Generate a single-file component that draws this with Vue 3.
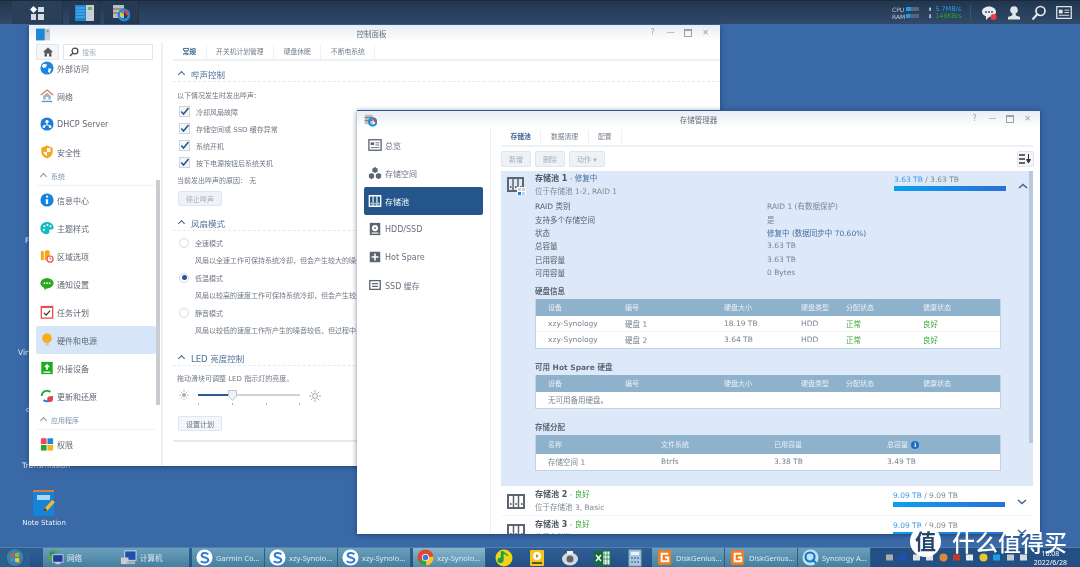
<template>
  <div class="desktop">
    <header class="topbar">
      <div class="top-left">
        <div class="top-btn wide">
          <svg width="16" height="16" viewBox="0 0 16 16"><path d="M4.5 1 8 4.5 4.5 8 1 4.5Z" fill="#fff"/><rect x="9" y="2" width="6" height="5" fill="#d5dbe2"/><rect x="2" y="9" width="5" height="6" fill="#d5dbe2"/><rect x="9" y="9" width="6" height="6" fill="#d5dbe2"/></svg>
        </div>
        <div class="top-btn active first">
          <svg width="19" height="16" viewBox="0 0 19 16"><rect width="11" height="16" fill="#1d87d8"/><path d="M1 3h9M1 6h9M1 9h9M1 12h9" stroke="#7cc3f2" stroke-width=".8"/><rect x="11" width="8" height="16" fill="#c7ced4"/><rect x="13" y="2" width="4" height="3" fill="#6fb46b"/></svg>
        </div>
        <div class="top-btn active second">
          <svg width="18" height="18" viewBox="0 0 18 18"><rect x="1" y="1" width="11" height="13" fill="#b9bec4"/><path d="M1 5h11M1 9h11" stroke="#8a5b3c"/><circle cx="12" cy="11" r="5" fill="none" stroke="#1c8be0" stroke-width="3"/><path d="M12 6a5 5 0 0 1 5 5h-3Z" fill="#e8412f"/><path d="M8 8l4 3-4 2Z" fill="#f2c52c"/></svg>
        </div>
      </div>
      <div class="top-right">
        <div class="meter">
          <div class="meter-row"><span>CPU</span><i class="bar"><b style="width: 40%"></b></i></div>
          <div class="meter-row"><span>RAM</span><i class="bar"><b style="width: 30%"></b></i></div>
        </div>
        <div class="speed">
          <div><em>⬆</em><span class="up">5.7MB/s</span></div>
          <div><em>⬇</em><span class="down">149KB/s</span></div>
        </div>
        <div class="top-sep"></div>
        <svg class="ti" width="16" height="16" viewBox="0 0 16 16"><path d="M8 1.5c4 0 7 2.3 7 5.2s-3 5.2-7 5.2l-3 3v-3.6C2.5 10.5 1 8.8 1 6.7 1 3.800 4 1.500 8 1.500Z" fill="#e8ecef"/><circle cx="5" cy="7" r=".9" fill="#2d4460"/><circle cx="8" cy="7" r=".9" fill="#2d4460"/><circle cx="11" cy="7" r=".9" fill="#2d4460"/><circle cx="12.5" cy="12" r="3" fill="#ef3d3d"/></svg>
        <svg class="ti" width="16" height="16" viewBox="0 0 16 16"><circle cx="8" cy="5" r="3.8" fill="#dfe4e9"/><path d="M6.5 8h3l.5 2.5 4 1.5v2.5H2V12l4-1.5Z" fill="#dfe4e9"/></svg>
        <svg class="ti" width="16" height="16" viewBox="0 0 16 16"><circle cx="9.5" cy="6" r="4.5" fill="none" stroke="#e8ecef" stroke-width="1.7"/><path d="M6 9.5 1.5 14.5" stroke="#e8ecef" stroke-width="2"/></svg>
        <svg class="ti" width="16" height="13" viewBox="0 0 17 14"><rect x=".7" y=".7" width="15.6" height="12.6" fill="none" stroke="#e8ecef" stroke-width="1.3"/><rect x="3" y="4" width="4" height="4" fill="#e8ecef"/><path d="M9 4.5h5M9 7h5M3 10h11" stroke="#e8ecef"/></svg>
      </div>
    </header>

    <div class="shortcut s1">F</div>
    <div class="shortcut s2">Virt</div>
    <div class="shortcut s3">q</div>
    <div class="shortcut s4">Transmission</div>
    <div class="note">
      <svg width="24" height="28" viewBox="0 0 24 28"><rect x="1" y="1" width="21" height="26" rx="1" fill="#1683d8"/><rect x="1" y="1" width="21" height="2" fill="#e0793a"/><rect x="5" y="6" width="13" height="5" fill="#a9d7f5"/><path d="M11 23l2-4 7-8 3 2-7 8Z" fill="#f5b92e"/><path d="M11 23l2-4 2 2Z" fill="#333"/></svg>
      <span>Note Station</span>
    </div>

    <!-- control panel -->
    <section class="window panel">
      <div class="titlebar">
        <svg class="app-ico" width="14" height="13" viewBox="0 0 19 16"><rect width="12" height="16" fill="#1d87d8"/><rect x="12" width="7" height="16" fill="#c7ced4"/><rect x="14" y="2" width="3" height="3" fill="#6fb46b"/></svg>
        <span class="win-title">控制面板</span>
        <div class="win-ctl"><span>?</span><span>—</span><span class="sq"></span><span>✕</span></div>
      </div>
      <div class="win-body">
        <aside class="side">
          <div class="side-top">
            <div class="home">
              <svg width="10" height="10" viewBox="0 0 10 10"><path d="M5 .5 0 5h1.5v4.5H4v-3h2v3h2.5V5H10Z" fill="#55595f"/></svg>
            </div>
            <div class="search">
              <svg width="10" height="10" viewBox="0 0 10 10"><circle cx="6" cy="4" r="2.9" fill="none" stroke="#444" stroke-width="1.2"/><path d="M3.8 6.2 1 9" stroke="#444" stroke-width="1.3"/></svg>
              <span>搜索</span>
            </div>
          </div>
          <div class="side-list">
            <div class="side-scroll"></div>
            <template v-for="row in panelItems" :key="row.label">
              <div v-if="row.head" class="side-head"><span class="caret"></span>{{ row.label }}</div>
              <div v-else class="side-item" :class="{ on: row.on }">
                <svg width="14" height="14" viewBox="0 0 16 16" v-html="row.svg"></svg>
                <span>{{ row.label }}</span>
              </div>
            </template>
          </div>
        </aside>
        <main class="pane">
          <nav class="tabs">
            <span v-for="(t, i) in panelTabs" :key="t" class="tab" :class="{ cur: i === 0 }">{{ t }}</span>
          </nav>
          <h3 class="sec first"><span class="caret dark"></span>哔声控制</h3>
          <div class="line">以下情况发生时发出哔声：</div>
          <div v-for="c in beeps" :key="c" class="line check">
            <svg width="11" height="11" viewBox="0 0 11 11"><rect x=".5" y=".5" width="10" height="10" fill="#f4f6f9" stroke="#ccd5df"/><path d="M2.3 5.5 4.5 8l5-6" fill="none" stroke="#24558e" stroke-width="1.5"/></svg>
            <span>{{ c }}</span>
          </div>
          <div class="line">当前发出哔声的原因： 无</div>
          <button class="btn muted stop">停止哔声</button>

          <h3 class="sec fan"><span class="caret dark"></span>风扇模式</h3>
          <div class="fans">
            <template v-for="m in fanModes" :key="m.name">
              <div class="row-fan radio"><i :class="{ sel: m.sel }"></i><span>{{ m.name }}</span></div>
              <div class="row-fan desc">{{ m.desc }}</div>
            </template>
          </div>

          <h3 class="sec led"><span class="caret dark"></span>LED 亮度控制</h3>
          <div class="line hint">拖动滑块可调整 LED 指示灯的亮度。</div>
          <div class="slider">
            <svg width="10" height="10" viewBox="0 0 10 10"><circle cx="5" cy="5" r="2" fill="#aaa"/><path d="M5 0v2M5 8v2M0 5h2M8 5h2M1.5 1.5 3 3M7 7l1.5 1.5M8.5 1.5 7 3M3 7 1.5 8.5" stroke="#aaa" stroke-width=".8"/></svg>
            <div class="track">
              <b></b>
              <svg class="thumb" width="9" height="11" viewBox="0 0 9 11"><path d="M.5.5h8v6l-4 4-4-4Z" fill="#eef1f5" stroke="#bcc5cf"/></svg>
              <i v-for="n in 4" :key="n" class="tick" :class="'tk' + n"></i>
            </div>
            <svg width="12" height="12" viewBox="0 0 10 10"><circle cx="5" cy="5" r="2" fill="none" stroke="#999" stroke-width=".7"/><path d="M5 0v2M5 8v2M0 5h2M8 5h2M1.5 1.5 3 3M7 7l1.5 1.5M8.5 1.5 7 3M3 7 1.5 8.5" stroke="#999" stroke-width=".7"/></svg>
          </div>
          <button class="btn plan">设置计划</button>
          <div class="end-line"></div>
        </main>
      </div>
    </section>

    <!-- storage manager -->
    <section class="window storage">
      <div class="titlebar">
        <svg class="app-ico" width="13" height="13" viewBox="0 0 18 18"><rect x="1" y="1" width="11" height="13" fill="#b9bec4"/><path d="M1 5h11M1 9h11" stroke="#8a5b3c"/><circle cx="12" cy="11" r="5" fill="none" stroke="#1c8be0" stroke-width="3"/><path d="M12 6a5 5 0 0 1 5 5h-3Z" fill="#e8412f"/></svg>
        <span class="win-title">存储管理器</span>
        <div class="win-ctl"><span>?</span><span>—</span><span class="sq"></span><span>✕</span></div>
      </div>
      <div class="win-body">
        <aside class="nav">
          <div v-for="n in storageNav" :key="n.label" class="nav-item" :class="{ on: n.on }">
            <svg width="14" height="14" viewBox="0 0 16 16" v-html="n.svg"></svg>
            <span>{{ n.label }}</span>
          </div>
        </aside>
        <main class="store">
          <nav class="tabs">
            <span v-for="(t, i) in storageTabs" :key="t" class="tab" :class="{ cur: i === 0 }">{{ t }}</span>
          </nav>
          <div class="tools">
            <button class="btn muted">新增</button>
            <button class="btn muted">删除</button>
            <button class="btn muted">动作 ▾</button>
            <button class="btn sort">
              <svg width="13" height="10" viewBox="0 0 13 10"><path d="M0 1h6M0 5h6M0 9h6" stroke="#333" stroke-width="1.4"/><path d="M9.5 0v6M7.5 5.5h4l-2 3.5Z" fill="#333" stroke="#333"/></svg>
            </button>
          </div>

          <div class="pools">
            <div class="pool open">
              <div class="pool-head">
                <svg class="pool-ico" width="19" height="18" viewBox="0 0 19 18"><path d="M1 1h15v13H1Z" fill="none" stroke="#5c6470" stroke-width="2"/><path d="M6 2v11M11 2v11" stroke="#5c6470" stroke-width="1.5"/><rect x="3" y="9" width="1.5" height="2" fill="#5c6470"/><rect x="8" y="9" width="1.5" height="2" fill="#5c6470"/><rect x="13" y="9" width="1.5" height="2" fill="#5c6470"/><rect x="10" y="10" width="9" height="8" fill="#fff"/><rect x="11" y="11" width="3" height="3" fill="#c9d2dc"/><rect x="15" y="11" width="3" height="3" fill="#c9d2dc"/><rect x="11" y="15" width="3" height="3" fill="#0f86e8"/><rect x="15" y="15" width="3" height="3" fill="#c9d2dc"/></svg>
                <div class="pool-name">
                  <div><b>存储池 1</b> <span class="dash">-</span> <span class="repair">修复中</span></div>
                  <div class="pool-sub">位于存储池 1-2, RAID 1</div>
                </div>
                <div class="usage">
                  <div><span class="used">3.63 TB</span> / 3.63 TB</div>
                  <div class="usage-bar"></div>
                </div>
                <svg class="chev" width="10" height="6" viewBox="0 0 10 6"><path d="M1 5l4-3.500L9 5" fill="none" stroke="#3d6797" stroke-width="1.5"/></svg>
              </div>
              <dl class="facts">
                <div v-for="f in facts" :key="f[0]" class="fact">
                  <dt>{{ f[0] }}</dt>
                  <dd :class="{ repair: f[2] }">{{ f[1] }}</dd>
                </div>
              </dl>

              <h4 class="tbl-title t1">硬盘信息</h4>
              <div class="tbl">
                <div class="tr th disks"><span v-for="c in diskCols" :key="c">{{ c }}</span></div>
                <div v-for="d in disks" :key="d[1]" class="tr disks">
                  <span>xzy-Synology</span><span>{{ d[1] }}</span><span>{{ d[2] }}</span><span>HDD</span>
                  <span class="ok">正常</span><span class="ok">良好</span>
                </div>
              </div>

              <h4 class="tbl-title t2">可用 Hot Spare 硬盘</h4>
              <div class="tbl">
                <div class="tr th disks"><span v-for="c in diskCols" :key="c">{{ c }}</span></div>
                <div class="tr"><span>无可用备用硬盘。</span></div>
              </div>

              <h4 class="tbl-title t3">存储分配</h4>
              <div class="tbl">
                <div class="tr th vols tall">
                  <span>名称</span><span>文件系统</span><span>已用容量</span>
                  <span>总容量 <i class="info">i</i></span>
                </div>
                <div class="tr vols"><span>存储空间 1</span><span>Btrfs</span><span>3.38 TB</span><span>3.49 TB</span></div>
              </div>
            </div>

            <div v-for="p in closedPools" :key="p.name" class="pool closed">
              <svg class="pool-ico" width="19" height="15" viewBox="0 0 19 15"><path d="M1 1h16v13H1Z" fill="none" stroke="#5c6470" stroke-width="2"/><path d="M6.5 2v11M11.5 2v11" stroke="#5c6470" stroke-width="1.5"/><rect x="3" y="9" width="1.5" height="2" fill="#5c6470"/><rect x="8.5" y="9" width="1.5" height="2" fill="#5c6470"/><rect x="14" y="9" width="1.5" height="2" fill="#5c6470"/></svg>
              <div class="pool-name">
                <div><b>{{ p.name }}</b> <span class="dash">-</span> <span class="ok">良好</span></div>
                <div class="pool-sub">{{ p.sub }}</div>
              </div>
              <div class="usage">
                <div><span class="used">9.09 TB</span> / 9.09 TB</div>
                <div class="usage-bar"></div>
              </div>
              <svg class="chev" width="10" height="6" viewBox="0 0 10 6"><path d="M1 1l4 3.500L9 1" fill="none" stroke="#3d6797" stroke-width="1.5"/></svg>
            </div>
          </div>
        </main>
      </div>
    </section>

    <footer class="taskbar">
      <div class="start">
        <svg width="22" height="19" viewBox="0 0 22 22"><circle cx="11" cy="11" r="10.5" fill="#3c7eb0" stroke="#24506f"/><path d="M6 7l4-1v4.500H6Z" fill="#e8512a"/><path d="M11 6l5-1v5.500h-5Z" fill="#7cc03c"/><path d="M6 11.500h4V16l-4-1Z" fill="#2e9be0"/><path d="M11 11.500h5V17l-5-1Z" fill="#f2c32c"/></svg>
      </div>
      <div class="grip"></div>
      <div v-for="t in taskLeft" :key="t.id" class="task" :class="t.cls">
        <svg width="17" height="17" viewBox="0 0 18 18" v-html="t.svg"></svg>
        <span>{{ t.label }}</span>
      </div>
      <div class="quick">
        <svg v-for="q in quick" :key="q.id" width="18" height="18" viewBox="0 0 18 18" v-html="q.svg"></svg>
      </div>
      <div v-for="t in taskRight" :key="t.id" class="task">
        <svg width="17" height="17" viewBox="0 0 18 18" v-html="t.svg"></svg>
        <span>{{ t.label }}</span>
      </div>
      <div class="tray">
        <div class="tray-icons">
          <svg v-for="(c, i) in trayColors" :key="i" width="9" height="9" viewBox="0 0 9 9"><circle v-if="c.round" cx="4.5" cy="4.5" r="4" :fill="c.fill"/><rect v-else x="1" y="1.5" width="7" height="6" :fill="c.fill"/></svg>
        </div>
        <div class="clock"><span>16:08</span><span>2022/6/28</span></div>
      </div>
    </footer>

    <div class="mark">
      <span class="mark-dot">值</span>
      <span class="mark-text">什么值得买</span>
    </div>
  </div>
</template>

<script setup>
const panelTabs = ['常规', '开关机计划管理', '硬盘休眠', '不断电系统']
const storageTabs = ['存储池', '数据清理', '配置']
const beeps = ['冷却风扇故障', '存储空间或 SSD 缓存异常', '系统开机', '按下电源按钮后系统关机']

const fanModes = [
  { name: '全速模式', desc: '风扇以全速工作可保持系统冷却，但会产生较大的噪音。' },
  { name: '低温模式', desc: '风扇以较高的速度工作可保持系统冷却，但会产生较大的噪音。', sel: true },
  { name: '静音模式', desc: '风扇以较低的速度工作所产生的噪音较低，但过程中系统温度较高。' }
]

const panelItems = [
  { label: '外部访问', svg: '<circle cx="8" cy="8" r="7.5" fill="#1b86e0"/><path d="M4 3l4 1-1 3-3 1-2-2ZM10 8l3 1-2 5-2-2Z" fill="#fff"/>' },
  { label: '网络', svg: '<path d="M8 1 1 7M8 1l7 6" stroke="#e8604c" stroke-width="1.5"/><path d="M8 4 3.5 8v4h9V8Z" fill="#a9b4be"/><rect x="6.5" y="9" width="3" height="3" fill="#fff"/><rect x="2" y="13.5" width="12" height="1.5" fill="#3c9be8"/>' },
  { label: 'DHCP Server', svg: '<circle cx="8" cy="8" r="7.5" fill="#1b7fd9"/><circle cx="8" cy="5.5" r="2" fill="#fff"/><circle cx="4.5" cy="11" r="1.5" fill="#fff"/><circle cx="11.5" cy="11" r="1.5" fill="#fff"/><path d="M8 7v2M4.5 10 8 9l3.5 1" stroke="#fff" fill="none"/>' },
  { label: '安全性', svg: '<path d="M8 .5 14.5 3v5c0 3.5-3 6-6.5 7.500C4.500 14 1.500 11.500 1.500 8V3Z" fill="#f5a81f"/><path d="M8 3.500h4V8H8v4.500C6 11.500 4 10 4 8h4Z" fill="#fff"/>' },
  { label: '系统', head: true },
  { label: '信息中心', svg: '<circle cx="8" cy="8" r="7.5" fill="#1283e0"/><rect x="7" y="3" width="2.3" height="2.3" fill="#fff"/><path d="M6.500 7h2.800v5.500H6.800" fill="#fff"/>' },
  { label: '主题样式', svg: '<path d="M8 1c4.500 0 7.500 3 7.500 6.500 0 3-3.500 2-4.500 2.500s.5 2-.5 3.500C9.500 15 8 15 7.500 15 3.500 15 .5 12 .5 8S3.500 1 8 1Z" fill="#13bcc0"/><circle cx="5" cy="6" r="1.2" fill="#fff"/><circle cx="8.5" cy="4.5" r="1.2" fill="#fff"/><circle cx="12" cy="6" r="1.2" fill="#fff"/><circle cx="4.5" cy="10" r="1.2" fill="#fff"/>' },
  { label: '区域选项', svg: '<path d="M1 2l4 1 3-2 3 1v5l-4 6-3-1-3 1Z" fill="#f6a81c"/><path d="M5 3v9" stroke="#fff"/><circle cx="11.5" cy="11.5" r="3.5" fill="#fff" stroke="#ee4a42" stroke-width="1.3"/><path d="M11.5 9.5v2H13" stroke="#ee4a42" fill="none"/>' },
  { label: '通知设置', svg: '<ellipse cx="8" cy="7" rx="7.5" ry="6" fill="#2aa71d"/><path d="M5 11v4l4-3Z" fill="#2aa71d"/><circle cx="5" cy="7" r="1" fill="#fff"/><circle cx="8" cy="7" r="1" fill="#fff"/><circle cx="11" cy="7" r="1" fill="#fff"/>' },
  { label: '任务计划', svg: '<rect x="1.5" y="2.5" width="13" height="12.5" fill="#fff" stroke="#ed4c49" stroke-width="1.5"/><rect x="1" y="1" width="14" height="2.5" fill="#ed4c49"/><path d="M4.500 9 7 11.500l4.500-5" fill="none" stroke="#333" stroke-width="1.4"/>' },
  { label: '硬件和电源', on: true, svg: '<circle cx="8" cy="6" r="5.5" fill="#f7ae16"/><rect x="6" y="11.5" width="4" height="3" fill="#c4ccd4"/>' },
  { label: '外接设备', svg: '<rect x="1.5" y="1" width="13" height="14" fill="#1eaa1a"/><path d="M8 3 4.500 7H7v3h2V7h2.500ZM4 12h8v1.300H4Z" fill="#fff"/>' },
  { label: '更新和还原', svg: '<path d="M2 8a6 6 0 0 1 10-4.500" fill="none" stroke="#2aa84a" stroke-width="2.2"/><path d="M14 8a6 6 0 0 1-10 4.500" fill="none" stroke="#1b86e0" stroke-width="2.2"/><circle cx="11.5" cy="11.5" r="3.3" fill="#ee4043"/>' },
  { label: '应用程序', head: true },
  { label: '权限', svg: '<rect x="1" y="2" width="6.5" height="6" fill="#ef4655"/><path d="M2.500 3V1.500H6V3" stroke="#ef4655" fill="none"/><rect x="8.5" y="1.5" width="6.5" height="6.5" fill="#1b86e0"/><rect x="1" y="9" width="6.5" height="6.5" fill="#27a532"/><rect x="8.5" y="9" width="6.5" height="6.5" fill="#f5b21c"/>' }
]

const grey = '#5d6570'
const storageNav = [
  { label: '总览', svg: `<rect x="1" y="2" width="14" height="12" fill="none" stroke="${grey}" stroke-width="1.5"/><rect x="3" y="5" width="4" height="3" fill="${grey}"/><path d="M8.5 5.5H13M8.5 8H13M3 11h10" stroke="${grey}"/>` },
  { label: '存储空间', svg: `<path d="M8 1l3 2v3.500L8 8 5 6.500V3ZM4 8l3 1.500V13l-3 2-3-2V9.500ZM12 8l3 1.500V13l-3 2-3-2V9.500Z" fill="${grey}"/>` },
  { label: '存储池', on: true, svg: '<path d="M1.5 2h13v12h-13Z" fill="none" stroke="#fff" stroke-width="1.5"/><path d="M5.8 2.500v11M10.200 2.500v11" stroke="#fff" stroke-width="1.3"/><path d="M3 10h1.300v2H3ZM7.400 10h1.300v2H7.400ZM11.700 10H13v2h-1.300Z" fill="#fff"/>' },
  { label: 'HDD/SSD', svg: `<rect x="2" y="1" width="12" height="14" fill="${grey}"/><circle cx="8" cy="7" r="3.5" fill="#fff"/><circle cx="8" cy="7" r="1" fill="${grey}"/><rect x="4" y="12" width="8" height="1.3" fill="#fff"/>` },
  { label: 'Hot Spare', svg: `<rect x="2" y="2" width="12" height="12" fill="${grey}"/><path d="M8 4v8M4 8h8" stroke="#fff" stroke-width="1.8"/>` },
  { label: 'SSD 缓存', svg: `<rect x="2" y="3" width="12" height="10" fill="none" stroke="${grey}" stroke-width="1.5"/><path d="M4.5 6.5h7M4.5 9.500h7" stroke="${grey}" stroke-width="1.3"/>` }
]

const facts = [
  ['RAID 类别', 'RAID 1 (有数据保护)'],
  ['支持多个存储空间', '是'],
  ['状态', '修复中 (数据同步中 70.60%)', true],
  ['总容量', '3.63 TB'],
  ['已用容量', '3.63 TB'],
  ['可用容量', '0 Bytes']
]

const diskCols = ['设备', '编号', '硬盘大小', '硬盘类型', '分配状态', '健康状态']
const disks = [
  ['xzy-Synology', '硬盘 1', '18.19 TB'],
  ['xzy-Synology', '硬盘 2', '3.64 TB']
]

const closedPools = [
  { name: '存储池 2', sub: '位于存储池 3, Basic' },
  { name: '存储池 3', sub: '位于存储池 4, Basic' }
]

const sogou = '<circle cx="9" cy="9" r="8.5" fill="#fff"/><path d="M13 5.500C11 3.500 6 3.800 6 6.500c0 3 7 2 7 5.200 0 3-5.500 3.300-8 1.300" fill="none" stroke="#2b7fd8" stroke-width="2.2"/>'
const disk = '<rect x="2" y="1" width="14" height="16" rx="2" fill="#ef7d22"/><path d="M13 5H6v8h7V9H9.500" fill="none" stroke="#fff" stroke-width="2"/>'

const taskLeft = [
  { id: 'net', label: '网络', cls: 'flat', svg: '<circle cx="7" cy="7" r="6.5" fill="#5aa548"/><path d="M3 3h5v4H3Z" fill="#2f7ad0"/><rect x="6" y="6" width="11" height="8" fill="#1a3f9c" stroke="#ccd"/><rect x="9" y="14" width="5" height="2" fill="#ccd"/>' },
  { id: 'pc', label: '计算机', cls: 'flat', svg: '<rect x="5" y="2" width="12" height="10" fill="#1d4fb0" stroke="#d7dde3"/><rect x="1" y="9" width="8" height="7" fill="#c9ced4"/><rect x="7" y="13" width="9" height="3" fill="#aeb5bc"/>' },
  { id: 'g', label: 'Garmin Co...', svg: sogou },
  { id: 'x1', label: 'xzy-Synolo...', svg: sogou },
  { id: 'x2', label: 'xzy-Synolo...', svg: sogou },
  { id: 'chrome', label: 'xzy-Synolo...', cls: 'lit', svg: '<circle cx="9" cy="9" r="8.5" fill="#e0492f"/><path d="M9 9 2 13a8.500 8.500 0 0 0 8 4.500Z" fill="#2ea24a"/><path d="M9 9l1 8.500A8.500 8.500 0 0 0 17.500 8Z" fill="#f5c52c"/><circle cx="9" cy="9" r="3.8" fill="#fff"/><circle cx="9" cy="9" r="3" fill="#3878e0"/>' }
]

const quick = [
  { id: 'qq', svg: '<circle cx="9" cy="9" r="8.5" fill="#f3d414"/><path d="M8 3v8.500a2.500 2 0 1 1-1.500-2V3Zm0 0c2 2 4 2 5 4" fill="#12a04c" stroke="#12a04c" stroke-width="1.3"/>' },
  { id: 'player', svg: '<rect x="2" y="1" width="14" height="16" rx="1" fill="#f4c51c"/><circle cx="9" cy="7" r="4" fill="#fff"/><path d="M8 5l3 2-3 2Z" fill="#d68a10"/><rect x="4" y="13" width="10" height="2" fill="#553"/>' },
  { id: 'cam', svg: '<ellipse cx="9" cy="10" rx="8" ry="6.5" fill="#d5d9de"/><circle cx="9" cy="10" r="3.5" fill="#5b6470"/><rect x="6" y="2" width="6" height="3" fill="#eee"/>' },
  { id: 'xl', svg: '<rect x="7" y="2" width="10" height="14" fill="#e9f3ea" stroke="#1d7a44"/><path d="M11 2v14M14 2v14M7 6h10M7 10h10" stroke="#1d7a44" stroke-width=".7"/><rect x="1" y="2" width="9" height="14" fill="#17693a"/><path d="M3 6l5 6M8 6l-5 6" stroke="#fff" stroke-width="1.4"/>' },
  { id: 'calc', svg: '<rect x="3" y="1" width="12" height="16" fill="#a8c8e4" stroke="#8aa"/><rect x="5" y="3" width="8" height="3" fill="#e8f2fa"/><path d="M5 8h2v2H5ZM8 8h2v2H8ZM11 8h2v2h-2ZM5 12h2v2H5ZM8 12h2v2H8ZM11 12h2v2h-2Z" fill="#6c8dab"/>' }
]

const taskRight = [
  { id: 'd1', label: 'DiskGenius...', svg: disk },
  { id: 'd2', label: 'DiskGenius...', svg: disk },
  { id: 's', label: 'Synology A...', svg: '<circle cx="9" cy="9" r="8.5" fill="#bfe2f3"/><circle cx="8.5" cy="8.5" r="4.8" fill="none" stroke="#1576c4" stroke-width="2.2"/><path d="M11 11l4 4" stroke="#1576c4" stroke-width="2.2"/>' }
]

const trayColors = [
  { fill: '#a7adb3' },
  { fill: '#1f4fb0', round: true },
  { fill: '#dfe4e8' },
  { fill: '#dfe4e8' },
  { fill: '#d88a3a', round: true },
  { fill: '#c0392b' },
  { fill: '#e8ecef' },
  { fill: '#e5c92c', round: true },
  { fill: '#19a0e0' },
  { fill: '#c3c9cf' },
  { fill: '#d5dade' }
]
</script>

<style>
html, body { margin: 0; background: #3a69a8; }
</style>

<style scoped>
.desktop {
  position: relative;
  width: 1080px;
  height: 567px;
  overflow: hidden;
  display: flex;
  flex-direction: column;
  justify-content: space-between;
  background: #3a69a8;
  font-family: "DejaVu Sans", "Noto Sans CJK SC", sans-serif;
  font-size: 8px;
  color: #5a6470;
  filter: blur(0.45px);
}

/* top bar */
.topbar {
  height: 24px;
  display: flex;
  justify-content: space-between;
  background: linear-gradient(#22364f, #304a69);
  border-top: 1px solid #1b2a3b;
  box-sizing: border-box;
  flex: none;
}
.top-left { display: flex; padding-left: 12px; }
.top-btn {
  display: flex;
  align-items: center;
  justify-content: center;
  border-right: 1px solid #22344a;
}
.top-btn.wide { width: 50px; background: #2a3f58; }
.top-btn.active { background: #263a53; }
.top-btn.first { width: 30px; margin-left: 6px; }
.top-btn.second { width: 34px; margin-left: 4px; }
.top-right { display: flex; align-items: center; padding-right: 8px; }
.meter { width: 28px; font-size: 6px; color: #c3ccd6; margin-right: 8px; }
.meter-row { display: flex; align-items: center; height: 7px; }
.meter-row span { width: 14px; }
.bar { width: 13px; height: 4px; background: #54677d; display: block; }
.bar b { display: block; height: 100%; background: #1e9bf0; }
.speed { width: 42px; font-size: 6.5px; }
.speed div { height: 7px; line-height: 7px; display: flex; gap: 3px; }
.speed em { font-style: normal; color: #dfe4e9; font-size: 5px; }
.up { color: #2f9bec; }
.down { color: #2fa52a; }
.top-sep { width: 1px; height: 16px; background: #3d536d; margin-right: 10px; }
.ti { margin-right: 9px; }
.ti:last-child { margin-right: 0; }

/* things on the desktop */
.shortcut { position: absolute; color: #e6edf5; font-size: 7.5px; }
.s1 { left: 25px; top: 236px; }
.s2 { left: 18px; top: 348px; }
.s3 { left: 26px; top: 405px; }
.s4 { left: 22px; top: 461px; }
.note {
  position: absolute;
  left: 14px;
  top: 489px;
  width: 60px;
  display: flex;
  flex-direction: column;
  align-items: center;
  gap: 2px;
  color: #eef3f8;
  font-size: 7px;
}

/* windows */
.window {
  position: absolute;
  display: flex;
  flex-direction: column;
  background: #fff;
  box-shadow: 0 1px 5px rgba(15, 35, 65, 0.55);
}
.panel { left: 29px; top: 25px; width: 691px; height: 441px; }
.storage { left: 357px; top: 110px; width: 683px; height: 424px; border-top: 1px solid #2c5c94; box-sizing: border-box; }
.titlebar {
  height: 17px;
  flex: none;
  position: relative;
  display: flex;
  align-items: center;
  justify-content: center;
  background: linear-gradient(#e9edf2, #fff);
}
.app-ico { position: absolute; left: 7px; top: 3px; }
.win-title { color: #66707c; font-size: 7.5px; }
.panel .win-title { margin-right: 6px; }
.win-ctl {
  position: absolute;
  right: 8px;
  top: 3px;
  display: flex;
  align-items: center;
  gap: 9px;
  color: #9aa3ad;
  font-size: 8px;
  line-height: 10px;
}
.panel .win-ctl { right: 10px; }
.win-ctl span { width: 9px; text-align: center; }
.win-ctl .sq { width: 6px; height: 5px; border: 1px solid #9aa3ad; border-top-width: 2px; }
.win-body { flex: 1; display: flex; min-height: 0; }

/* control panel side column */
.side {
  width: 134px;
  flex: none;
  border-right: 2px solid #eef0f3;
  display: flex;
  flex-direction: column;
  box-sizing: border-box;
}
.side-top { display: flex; gap: 4px; padding: 2px 8px 0 7px; height: 18px; box-sizing: border-box; flex: none; }
.home, .search {
  height: 16px;
  box-sizing: border-box;
  background: #f4f6f9;
  border: 1px solid #e2e7ed;
  display: flex;
  align-items: center;
}
.home { width: 23px; justify-content: center; }
.search { flex: 1; background: #fff; padding-left: 5px; gap: 3px; color: #aab2bb; font-size: 7px; }
.side-list { position: relative; flex: 1; overflow: hidden; padding-left: 7px; }
.side-item {
  width: 120px;
  height: 28px;
  box-sizing: border-box;
  display: flex;
  align-items: center;
  gap: 3px;
  padding-left: 4px;
  font-size: 8px;
  color: #5f6873;
  flex: none;
}
.side-scroll + .side-item { margin-top: -6px; }
.side-item.on { background: #d6e6f8; border-radius: 2px; }
.side-head {
  width: 120px;
  height: 20px;
  box-sizing: border-box;
  display: flex;
  align-items: center;
  gap: 5px;
  padding-left: 5px;
  font-size: 7px;
  color: #7d96b2;
  border-bottom: 1px solid #f0f2f5;
}
.side-scroll {
  position: absolute;
  left: 127px;
  top: 120px;
  width: 4px;
  height: 225px;
  background: #c9ccd0;
}
.caret {
  width: 4px;
  height: 4px;
  border-left: 1px solid #7d96b2;
  border-top: 1px solid #7d96b2;
  transform: rotate(45deg);
  margin-top: 2px;
  display: inline-block;
}
.caret.dark { border-color: #3b6290; border-width: 1.3px; margin-right: 7px; margin-left: 6px; }

/* control panel content */
.pane { flex: 1; padding: 0 0 0 10px; min-width: 0; overflow: hidden; }
.tabs {
  display: flex;
  height: 19px;
  align-items: center;
  border-bottom: 2px solid #eef0f3;
  box-sizing: border-box;
}
.pane .tabs { padding-top: 3px; }
.tab {
  padding: 0 9.5px;
  height: 14px;
  line-height: 14px;
  font-size: 6.8px;
  color: #75808c;
  border-right: 1px solid #eef0f3;
}
.tab.cur { color: #3f648f; font-weight: 700; }
.sec {
  height: 16px;
  margin: 0;
  display: flex;
  align-items: center;
  color: #4f7199;
  font-size: 8.5px;
  font-weight: 400;
  border-bottom: 1px dashed #e6e9ee;
  box-sizing: border-box;
}
.sec.first { margin-top: 5px; }
.sec.fan { margin-top: 9px; }
.sec.led { margin-top: 11px; }
.line {
  height: 17px;
  display: flex;
  align-items: center;
  padding-left: 4px;
  font-size: 7px;
  color: #707a85;
}
.sec + .line { margin-top: 3px; }
.sec.first + .line { margin-top: 4px; }
.check { padding-left: 6px; gap: 6px; }
.btn {
  font: inherit;
  font-size: 7px;
  color: #66707c;
  height: 15px;
  padding: 0 7px;
  background: #f3f6fa;
  border: 1px solid #dfe5ec;
  border-radius: 2px;
  box-sizing: border-box;
  display: block;
}
.btn.muted { color: #a5adb6; background: #eef2f6; }
.stop { margin: 3px 0 0 5px; width: 44px; padding: 0; }
.plan { margin: 8px 0 0 5px; width: 44px; padding: 0; }
.fans { margin-top: 3px; }
.row-fan {
  height: 17.5px;
  display: flex;
  align-items: center;
  font-size: 7px;
  color: #707a85;
  white-space: nowrap;
}
.radio { gap: 6px; padding-left: 6px; }
.radio i {
  width: 10px;
  height: 10px;
  box-sizing: border-box;
  border: 1px solid #d5dae0;
  border-radius: 50%;
  background: #fff;
  display: flex;
  align-items: center;
  justify-content: center;
}
.radio i.sel::after { content: ""; width: 5px; height: 5px; border-radius: 50%; background: #26558f; }
.desc { padding-left: 22px; }
.slider { display: flex; align-items: flex-start; height: 22px; padding-left: 6px; gap: 9px; }
.slider > svg { margin-top: 4px; }
.track { position: relative; width: 102px; height: 2px; margin-top: 8px; background: #ccd3da; }
.track b { display: block; width: 34px; height: 100%; background: #2b5a92; }
.thumb { position: absolute; left: 30px; top: -4px; }
.tick { position: absolute; top: 9px; width: 1px; height: 2px; background: #aab1b9; }
.tk1 { left: 0; }
.tk2 { left: 34px; }
.tk3 { left: 68px; }
.tk4 { left: 101px; }
.end-line { height: 2px; background: #e6e9ed; margin-top: 9px; }

/* storage manager */
.nav {
  width: 134px;
  flex: none;
  border-right: 1px solid #eceef1;
  padding: 3px 0 0 7px;
  box-sizing: border-box;
}
.nav-item {
  width: 119px;
  height: 28px;
  box-sizing: border-box;
  display: flex;
  align-items: center;
  gap: 3px;
  padding-left: 4px;
  font-size: 8px;
  color: #68727e;
}
.nav-item.on { background: #24568c; color: #fff; border-radius: 2px; }
.store { flex: 1; padding: 0 0 0 10px; min-width: 0; display: flex; flex-direction: column; overflow: hidden; position: relative; }
.store .tabs { margin-right: 7px; }
.tools { display: flex; gap: 4px; padding: 4px 6px 4px 0; flex: none; }
.tools .btn { height: 16px; }
.tools .btn.sort { margin-left: auto; padding: 0 1px; background: #f3f6fa; display: flex; align-items: center; }
.pools { width: 532px; flex: 1; min-height: 0; overflow: hidden; position: relative; }
.pool.open { height: 315px; background: #dde9f9; position: relative; padding-left: 34px; box-sizing: border-box; }
.pool.open::after {
  content: "";
  position: absolute;
  right: 0;
  top: 0;
  width: 4px;
  height: 272px;
  background: #b9c9dc;
}
.pool-head { height: 28px; display: flex; align-items: flex-start; padding-top: 1px; box-sizing: border-box; }
.pool-head .pool-ico { position: absolute; left: 6px; top: 6px; }
.pool-name { flex: 1; font-size: 7.5px; line-height: 13px; }
.pool-name b { font-size: 8px; color: #4c5560; }
.pool-sub { color: #7f8994; font-size: 7.5px; }
.dash { color: #7f8994; }
.repair { color: #46709e; }
.ok { color: #3ca93a; }
.usage { width: 112px; font-size: 7.5px; line-height: 13px; color: #7f8994; margin-top: 1px; }
.used { color: #3f97ea; }
.usage-bar { height: 5px; background: linear-gradient(90deg, #08a0f0, #2b6fd8); }
.chev { margin: 12px 5px 0 12px; flex: none; }
.pool.open .chev { margin: 12px 0 0; position: absolute; right: 5px; top: 0; }
.pool.open .usage { margin-right: 27px; }
.facts { margin: 0; }
.fact { display: flex; height: 13.4px; align-items: center; }
.fact dt { width: 232px; color: #555f6a; font-size: 7.5px; }
.fact dd { margin: 0; color: #7b8590; font-size: 7.5px; }
.fact dd.repair { color: #46709e; }
.tbl-title { margin: 0; height: 12px; line-height: 12px; font-size: 7.5px; color: #5d6772; font-weight: 700; }
.tbl-title.t1 { margin-top: 6.6px; }
.tbl-title.t2 { margin-top: 13px; }
.tbl-title.t3 { margin-top: 13px; }
.tbl { width: 466px; border: 1px solid #bfd3e6; border-top: 0; background: #fff; margin-top: 1px; box-sizing: border-box; }
.tr { height: 16px; box-sizing: border-box; display: flex; align-items: center; padding-left: 12px; font-size: 7.5px; color: #7b8590; border-bottom: 1px solid #f5f6f8; }
.tr:last-child { border-bottom: 0; }
.tr.th { height: 17px; background: #8eb1cc; color: #e8f0f6; font-size: 7px; border: 0; }
.tr.tall { height: 19px; }
.disks { display: grid; grid-template-columns: 77px 99px 77px 45px 77px 1fr; }
.vols { display: grid; grid-template-columns: 113px 113px 113px 1fr; }
.info {
  display: inline-block;
  width: 8px;
  height: 8px;
  line-height: 8px;
  text-align: center;
  border-radius: 50%;
  background: #1d6cc0;
  color: #fff;
  font-size: 6px;
  font-style: normal;
  font-weight: 700;
  margin-left: 1px;
}
.pool.closed {
  height: 28.5px;
  margin-top: 1px;
  display: flex;
  align-items: flex-start;
  padding-top: 1px;
  padding-left: 34px;
  box-sizing: border-box;
  position: relative;
  border-bottom: 1px solid #f5f6f8;
}
.pool.closed .pool-ico { position: absolute; left: 6px; top: 7px; }
.pool.closed .chev { margin: 11px 6px 0 12px; }

/* windows taskbar */
.taskbar {
  height: 20px;
  flex: none;
  display: flex;
  align-items: stretch;
  background: linear-gradient(#2f5f96, #234f83);
  border-top: 1px solid #537fae;
  box-sizing: border-box;
  position: relative;
  color: #dce7ef;
  font-family: "Noto Sans", "Noto Sans CJK SC", sans-serif;
  font-size: 7.5px;
}
.start { width: 30px; display: flex; align-items: center; justify-content: center; background: #2d5f8e; }
.grip { width: 13px; }
.task {
  width: 73px;
  flex: none;
  display: flex;
  align-items: center;
  gap: 3px;
  padding-left: 4px;
  box-sizing: border-box;
  white-space: nowrap;
  overflow: hidden;
  background: linear-gradient(#6b9fbb, #437f9f);
  border-right: 1px solid #2b5f84;
}
.task.flat { border-right: 0; }
.task.flat + .task:not(.flat) { margin-left: 3px; }
.task.lit { background: linear-gradient(#8ab6cc, #4f8cab); margin-left: 2px; }
.quick {
  width: 166px;
  flex: none;
  display: flex;
  align-items: center;
  justify-content: space-between;
  padding: 0 8px 0 9px;
  box-sizing: border-box;
}
.tray {
  flex: 1;
  display: flex;
  align-items: center;
  justify-content: space-between;
  background: #234f83;
  padding: 0 13px 0 14px;
}
.tray-icons { display: flex; gap: 4.4px; }
.clock { display: flex; flex-direction: column; align-items: center; line-height: 9px; font-size: 7px; color: #fff; }

/* site watermark */
.mark {
  position: absolute;
  left: 910px;
  top: 524px;
  display: flex;
  align-items: center;
  gap: 11px;
  pointer-events: none;
}
.mark-dot {
  width: 31px;
  height: 31px;
  border-radius: 50%;
  background: #fff;
  color: #27456b;
  font-size: 21px;
  font-weight: 700;
  line-height: 29px;
  text-align: center;
  font-family: "Noto Sans CJK SC", sans-serif;
}
.mark-text {
  color: #fff;
  font-size: 23px;
  font-family: "Noto Sans CJK SC", sans-serif;
  font-weight: 500;
  white-space: nowrap;
}
</style>
